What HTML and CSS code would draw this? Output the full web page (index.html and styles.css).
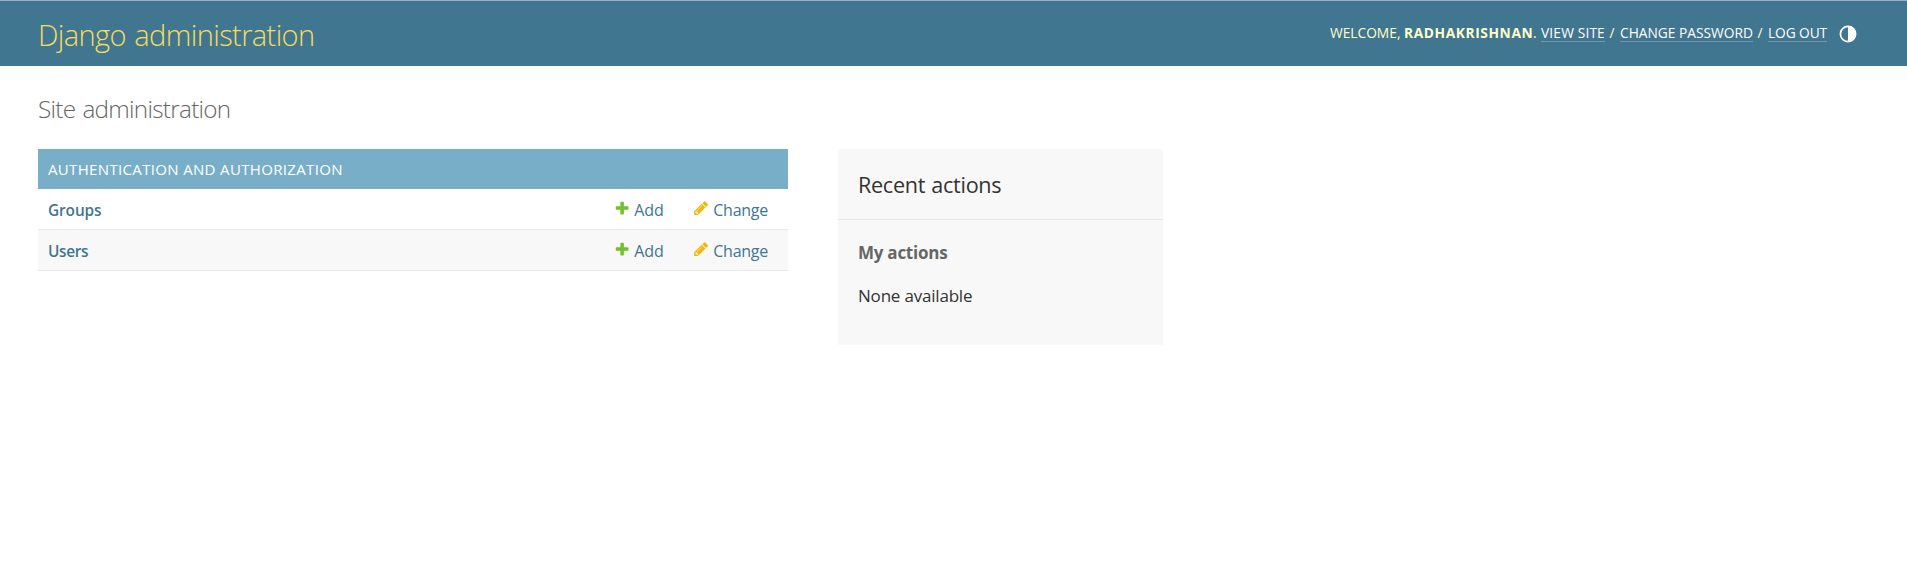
FILE: index.html
```html
<!DOCTYPE html>
<html lang="en">
<head>
<meta charset="utf-8">
<title>Site administration | Django site admin</title>
<link rel="stylesheet" href="styles.css">
</head>
<body>
<svg width="0" height="0" class="defs">
  <symbol id="add" viewBox="0 0 1792 1792"><path fill="#70bf2b" d="M1600 796v192q0 40-28 68t-68 28h-416v416q0 40-28 68t-68 28h-192q-40 0-68-28t-28-68v-416h-416q-40 0-68-28t-28-68v-192q0-40 28-68t68-28h416v-416q0-40 28-68t68-28h192q40 0 68 28t28 68v416h416q40 0 68 28t28 68z"/></symbol>
  <symbol id="change" viewBox="0 0 1792 1792"><path fill="#efb80b" d="M491 1536l91-91-235-235-91 91v107h128v128h107zm523-928q0-22-22-22-10 0-17 7l-542 542q-7 7-7 17 0 22 22 22 10 0 17-7l542-542q7-7 7-17zm-54-192l416 416-832 832h-416v-416zm683 96q0 53-37 90l-166 166-416-416 166-165q36-38 90-38 53 0 91 38l235 234q37 39 37 91z"/></symbol>
</svg>
<header class="header">
  <h1 class="brand">Django administration</h1>
  <div class="tools">
    <span class="welcome">WELCOME,</span>
    <strong class="user">RADHAKRISHNAN</strong><span class="dot">.</span>
    <a class="view">VIEW SITE</a><span class="slash">/</span>
    <a class="password">CHANGE PASSWORD</a><span class="slash">/</span>
    <a class="logout">LOG OUT</a>
    <svg class="theme" viewBox="0 0 18 18"><circle cx="9" cy="9" r="7.6" fill="none" stroke="#fff" stroke-width="1.7"/><path d="M9 1a8 8 0 0 1 0 16z" fill="#fff"/></svg>
  </div>
</header>
<main class="content">
  <h2 class="title">Site administration</h2>
  <div class="columns">
    <section class="module">
      <h3 class="caption">AUTHENTICATION AND AUTHORIZATION</h3>
      <div class="row">
        <a class="model groups">Groups</a>
        <a class="link add"><svg class="icon"><use href="#add"/></svg>Add</a>
        <a class="link change"><svg class="icon"><use href="#change"/></svg>Change</a>
      </div>
      <div class="row alt">
        <a class="model users">Users</a>
        <a class="link add"><svg class="icon"><use href="#add"/></svg>Add</a>
        <a class="link change"><svg class="icon"><use href="#change"/></svg>Change</a>
      </div>
    </section>
    <aside class="recent">
      <h2 class="recent-title">Recent actions</h2>
      <h3 class="mine">My actions</h3>
      <p class="none">None available</p>
    </aside>
  </div>
</main>
</body>
</html>
```
FILE: styles.css
```css
* { box-sizing: border-box; }
body { margin: 0; background: #fff; color: #333; font-family: "Open Sans", "Noto Sans", sans-serif; }
h1, h2, h3, p { margin: 0; }
.defs { display: block; }

.header { display: flex; justify-content: space-between; align-items: center; height: 66px; padding: 0 50px 0 38px; border-top: 1px solid #a0adc6; background: #417690; }
.brand { padding-top: 3px; color: #f5dd5d; font-size: 29px; font-weight: 300; line-height: 40px; letter-spacing: -0.61px; word-spacing: 1.5px; white-space: nowrap; }
.tools { display: flex; align-items: center; color: #ffc; font-size: 13.75px; line-height: 17px; white-space: nowrap; }
.tools > * { flex: none; margin-top: -2px; }
.welcome { width: 74px; }
.user { width: 129px; font-weight: 700; letter-spacing: 0.6px; }
.dot { width: 8px; }
.tools a { height: 18px; margin-top: -1px; color: #fff; border-bottom: 1px solid #6f98ac; }
.view { width: 64px; letter-spacing: 0.15px; }
.password { width: 133px; }
.logout { width: 59px; letter-spacing: -0.1px; }
.slash { width: 15px; padding-right: 1px; text-align: center; }
.theme { width: 18px; height: 18px; margin: 1px 0 0 12px !important; }

.content { padding: 25px 38px 0; }
.title { height: 58px; color: #666; font-size: 24.3px; font-weight: 300; line-height: 35px; letter-spacing: -0.72px; word-spacing: 1.5px; }
.columns { display: flex; gap: 50px; align-items: flex-start; }
.module { width: 750px; }
.caption { height: 40px; padding-left: 10px; background: #79aec8; color: #fff; font-size: 15px; font-weight: 400; line-height: 40px; letter-spacing: 0.34px; }
.row { display: flex; height: 41px; padding: 1px 0 0 10px; border-bottom: 1px solid #e8e8e8; color: #417690; font-size: 16px; line-height: 41px; }
.alt { background: #f8f8f8; }
.model { flex: 1; font-size: 15.4px; font-weight: 600; }
.groups { letter-spacing: -0.1px; }
.users { letter-spacing: -0.35px; }
.link { display: flex; }
.icon { flex: none; width: 16.25px; height: 16.25px; margin: 10px 4px 0 0; }
.add { width: 79px; letter-spacing: -0.1px; }
.change { width: 95px; letter-spacing: -0.25px; }

.recent { width: 325px; height: 196px; background: #f8f8f8; }
.recent-title { height: 71px; padding: 1px 0 0 20px; border-bottom: 1px solid #e8e8e8; font-size: 21.6px; font-weight: 400; line-height: 70px; letter-spacing: -0.3px; word-spacing: 1px; }
.mine { margin-top: 20px; padding-left: 20px; color: #666; font-size: 17px; font-weight: 700; line-height: 25px; letter-spacing: -0.25px; }
.none { margin-top: 18px; padding-left: 20px; font-size: 17px; line-height: 25px; letter-spacing: -0.2px; }
```
